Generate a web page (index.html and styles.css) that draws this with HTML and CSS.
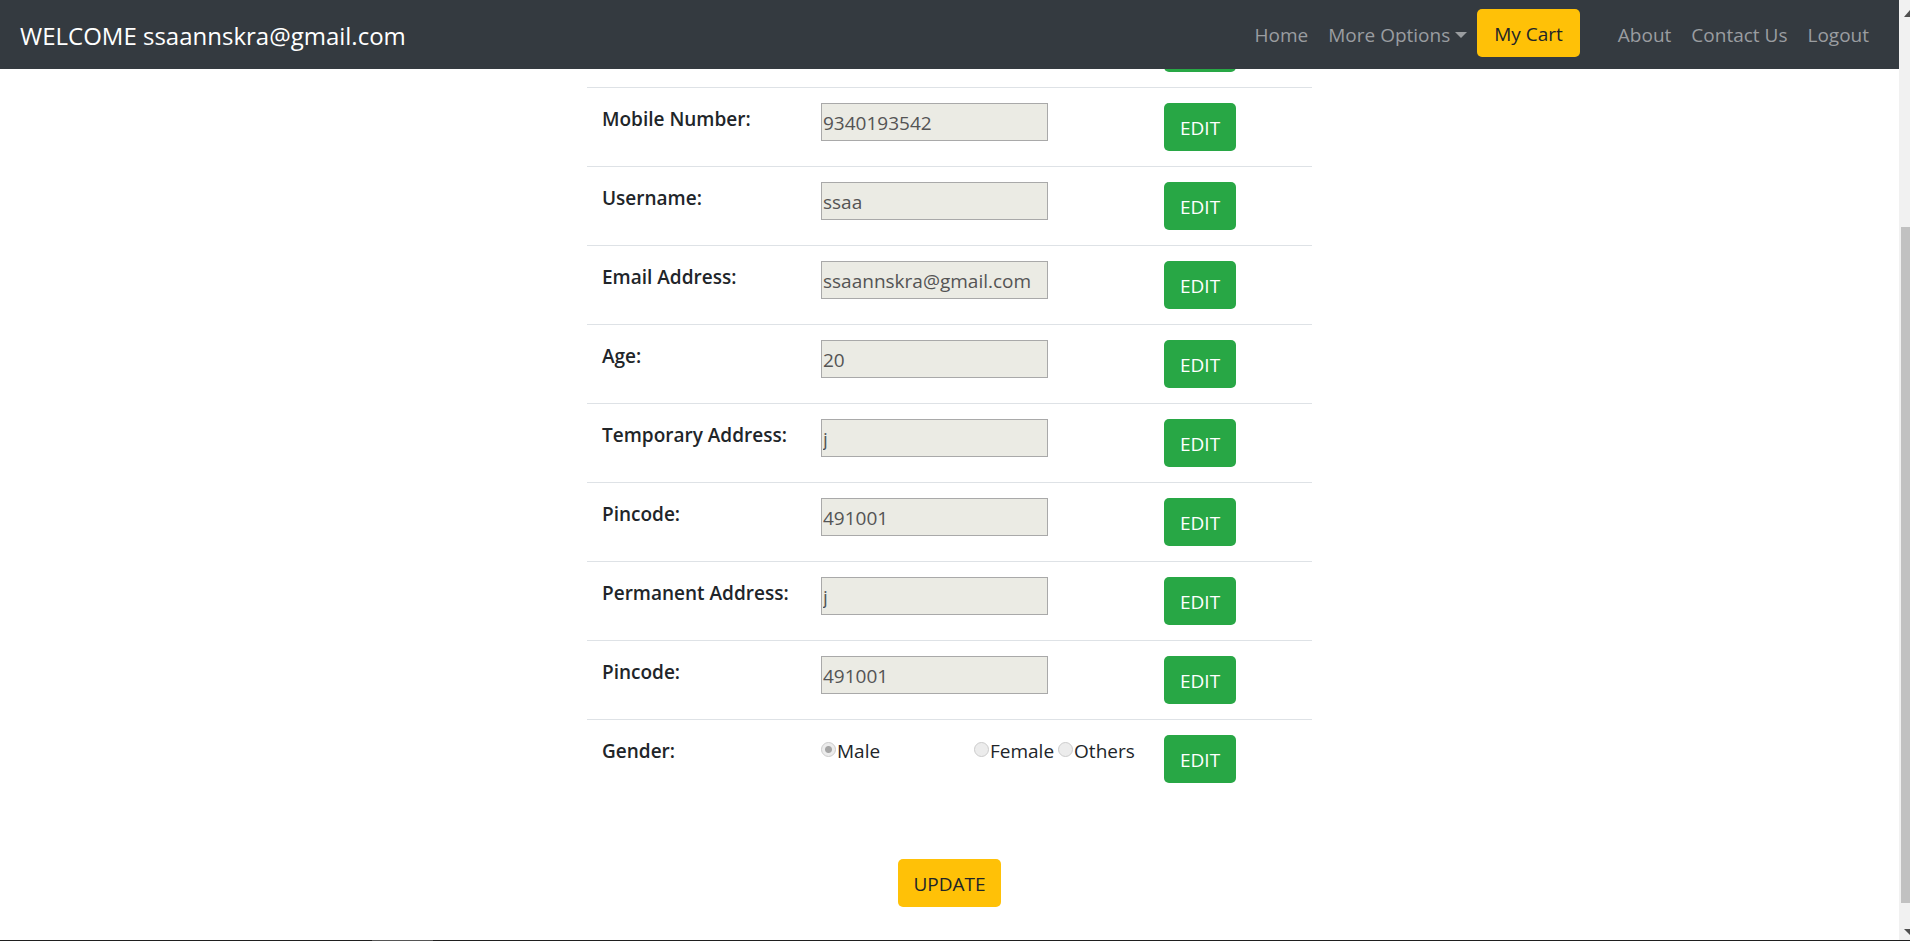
FILE: index.html
```html
<!DOCTYPE html>
<html lang="en">
<head>
<meta charset="utf-8">
<title>My Profile</title>
<link rel="stylesheet" href="styles.css">
</head>
<body>
<div class="page">
  <nav class="navbar">
    <a class="brand" href="#">WELCOME ssaannskra@gmail.com</a>
    <div class="nav-links">
      <a class="nav-link" href="#">Home</a>
      <a class="nav-link dropdown" href="#">More Options</a>
      <button class="btn btn-warning cart" type="button">My Cart</button>
      <a class="nav-link" href="#">About</a>
      <a class="nav-link" href="#">Contact Us</a>
      <a class="nav-link" href="#">Logout</a>
    </div>
  </nav>
  <form class="profile">
    <table class="fields">
      <colgroup><col class="col-label"><col class="col-first"><col class="col-second"><col class="col-action"></colgroup>
      <tbody>
      <tr><th></th><td colspan="2"></td><td><button class="btn btn-success" type="button" aria-label="Edit"></button></td></tr>
      <tr><th><label for="mobile">Mobile Number:</label></th><td colspan="2"><input class="text" id="mobile" value="9340193542" disabled></td><td><button class="btn btn-success" type="button">EDIT</button></td></tr>
      <tr><th><label for="username">Username:</label></th><td colspan="2"><input class="text" id="username" value="ssaa" disabled></td><td><button class="btn btn-success" type="button">EDIT</button></td></tr>
      <tr><th><label for="email">Email Address:</label></th><td colspan="2"><input class="text" id="email" value="ssaannskra@gmail.com" disabled></td><td><button class="btn btn-success" type="button">EDIT</button></td></tr>
      <tr><th><label for="age">Age:</label></th><td colspan="2"><input class="text" id="age" value="20" disabled></td><td><button class="btn btn-success" type="button">EDIT</button></td></tr>
      <tr><th><label for="temporary">Temporary Address:</label></th><td colspan="2"><input class="text" id="temporary" value="j" disabled></td><td><button class="btn btn-success" type="button">EDIT</button></td></tr>
      <tr><th><label for="temporary-pin">Pincode:</label></th><td colspan="2"><input class="text" id="temporary-pin" value="491001" disabled></td><td><button class="btn btn-success" type="button">EDIT</button></td></tr>
      <tr><th><label for="permanent">Permanent Address:</label></th><td colspan="2"><input class="text" id="permanent" value="j" disabled></td><td><button class="btn btn-success" type="button">EDIT</button></td></tr>
      <tr><th><label for="permanent-pin">Pincode:</label></th><td colspan="2"><input class="text" id="permanent-pin" value="491001" disabled></td><td><button class="btn btn-success" type="button">EDIT</button></td></tr>
      <tr>
        <th>Gender:</th>
        <td><label class="choice"><input type="radio" name="gender" checked disabled>Male</label></td>
        <td><div class="choices"><label class="choice"><input type="radio" name="gender" disabled>Female</label><label class="choice"><input type="radio" name="gender" disabled>Others</label></div></td>
        <td><button class="btn btn-success" type="button">EDIT</button></td>
      </tr>
      </tbody>
    </table>
    <button class="btn btn-warning update" type="submit">UPDATE</button>
  </form>
</div>
<div class="scrollbar" aria-hidden="true">
  <svg class="arrow" viewBox="0 0 11 20"><path d="M5 17 11 10V17Z"/></svg>
  <div class="track"><div class="thumb"></div></div>
  <svg class="arrow" viewBox="0 0 11 20"><path d="M5 9H11V15Z"/></svg>
</div>
<div class="taskbar"><div class="active"></div></div>
</body>
</html>
```
FILE: styles.css
```css
* { box-sizing: border-box; }
body {
  margin: 0;
  height: 100vh;
  overflow: hidden;
  display: grid;
  grid-template-columns: 1fr 11px;
  grid-template-rows: 1fr 1px;
  background: #fff;
  color: #212529;
  font-family: "Open Sans", "Noto Sans", sans-serif;
  font-size: 19px;
  line-height: 32px;
}
.page { position: relative; overflow: hidden; }
.navbar {
  position: absolute;
  top: 0;
  left: 0;
  right: 0;
  z-index: 1;
  display: flex;
  align-items: center;
  justify-content: space-between;
  padding: 9px 20px 12px;
  background: #343a40;
}
.brand { padding-top: 5px; color: #fff; font-size: 24px; text-decoration: none; }
.nav-links { display: flex; align-items: center; }
.nav-link { padding: 3px 10px 0; color: #9a9da0; text-decoration: none; }
.dropdown { display: flex; align-items: center; gap: 5px; }
.dropdown::after {
  content: "";
  border: 6px solid transparent;
  border-top-color: currentColor;
  border-bottom: 0;
}
.btn {
  height: 48px;
  padding: 2px 16px 0;
  border: 0;
  border-radius: 5px;
  font: inherit;
}
.btn-success { width: 72px; background: #28a745; color: #fff; display: block; }
.btn-warning { background: #ffc107; color: #212529; }
.cart { margin-right: 28px; padding: 2px 17px 0; }
.update { padding: 2px 15px 0; }
.profile {
  display: flex;
  flex-direction: column;
  align-items: center;
  gap: 60px;
  padding-top: 8px;
}
.fields { width: 725px; table-layout: fixed; border-collapse: collapse; }
.col-label { width: 219px; }
.col-first { width: 153px; }
.col-second { width: 190px; }
.fields th, .fields td {
  height: 79px;
  padding: 15px;
  border-top: 1px solid #dee2e6;
  vertical-align: top;
  text-align: left;
  white-space: nowrap;
}
.fields th { font-weight: 600; padding-right: 0; }
.text {
  display: block;
  width: 227px;
  height: 38px;
  padding: 2px 1px 0;
  border: 1px solid #a9a9a9;
  background: #ebebe4;
  color: #545454;
  font: inherit;
}
.choices { display: flex; gap: 4px; }
.choice { display: flex; align-items: center; gap: 1px; }
.choice input {
  appearance: none;
  width: 15px;
  height: 15px;
  margin: 0 0 3px;
  border: 1px solid #ccc;
  border-radius: 50%;
  background: #ececec;
}
.choice input:checked { background: radial-gradient(circle, #a5a5a5 0 3px, #ececec 4px); }
.scrollbar { display: flex; flex-direction: column; background: #f1f1f1; }
.arrow { width: 11px; height: 20px; fill: #505050; }
.track { flex: 1; padding: 207px 0 17px 2px; }
.thumb { height: 100%; background: #c1c1c1; }
.taskbar { grid-column: 1 / -1; background: #1f1f1f; }
.active { width: 61px; height: 1px; margin-left: 372px; background: #555; }
```
